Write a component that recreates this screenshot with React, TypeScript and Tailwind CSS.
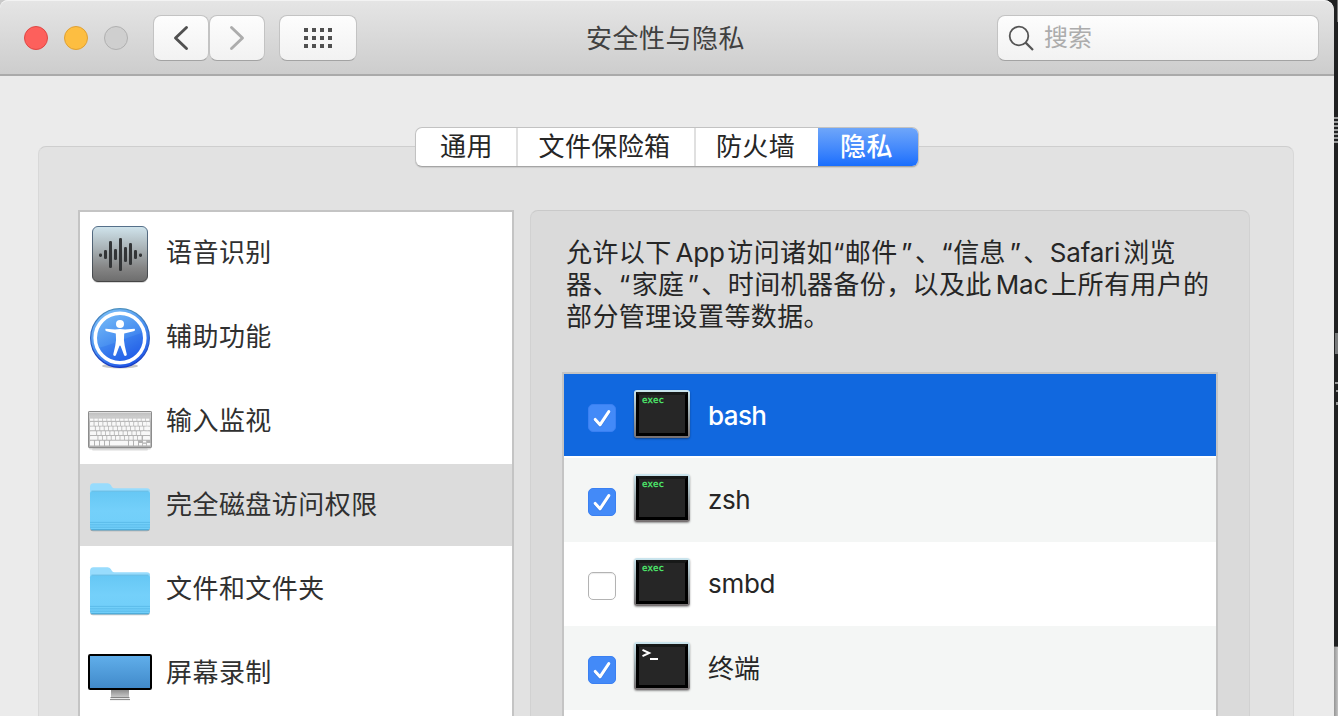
import React from "react";

const font = "font-[Inter,'Noto_Sans_CJK_SC',sans-serif]";

function VoiceIcon() {
  const bars: [number, number, number][] = [
    [12.5, 31.5, 2.5], [17.5, 28, 9], [22.5, 19, 27], [27.5, 27, 11], [32.5, 16, 33],
    [37.5, 25, 15], [42.5, 21, 22], [47.5, 28, 9], [52.5, 31.5, 2.5],
  ];
  return (
    <svg width="64" height="64" viewBox="0 0 64 64" className="shrink-0">
      <defs>
        <linearGradient id="voice" x1="0" y1="0" x2="0" y2="1">
          <stop offset="0" stopColor="#d0e4ec" />
          <stop offset="0.4" stopColor="#a9b2b6" />
          <stop offset="0.75" stopColor="#858585" />
          <stop offset="1" stopColor="#6d6d6d" />
        </linearGradient>
        <linearGradient id="voiceEdge" x1="0" y1="0" x2="0" y2="1">
          <stop offset="0" stopColor="#56708a" />
          <stop offset="1" stopColor="#454545" />
        </linearGradient>
      </defs>
      <rect x="4" y="5" width="56" height="56" rx="6" fill="#000" opacity="0.15" />
      <rect x="4.5" y="4.5" width="55" height="55" rx="5.5" fill="url(#voice)" stroke="url(#voiceEdge)" />
      {bars.map(([x, y, h]) => (
        <rect key={x} x={x - 1.5} y={y} width="3" height={Math.max(h, 3.4)} rx="1.3" fill="#333537" />
      ))}
    </svg>
  );
}

function AccessIcon() {
  return (
    <svg width="64" height="64" viewBox="0 0 64 64" className="shrink-0">
      <defs>
        <linearGradient id="acc" x1="0.2" y1="0" x2="0.75" y2="1">
          <stop offset="0" stopColor="#7cc0f8" />
          <stop offset="0.5" stopColor="#4a91f1" />
          <stop offset="1" stopColor="#1a50e6" />
        </linearGradient>
        <linearGradient id="accEdge" x1="0" y1="0" x2="0" y2="1">
          <stop offset="0" stopColor="#4c8fbd" />
          <stop offset="1" stopColor="#1538c4" />
        </linearGradient>
      </defs>
      <ellipse cx="32" cy="60" rx="18" ry="2.4" fill="#000" opacity="0.22" />
      <circle cx="32" cy="32" r="29.4" fill="url(#acc)" stroke="url(#accEdge)" strokeWidth="1.2" />
      <path d="M9 42C22 40 36 32 54 27A23 23 0 0 1 9 42Z" fill="#1556e8" opacity="0.2" />
      <circle cx="32" cy="32" r="24.8" fill="none" stroke="#fff" strokeWidth="3.6" />
      <circle cx="32" cy="18" r="4" fill="#fff" />
      <path d="M17.5 22.8 Q16.5 24.6 18.5 25.2 L27.8 27.6 Q28.6 34 27.2 40 L25.2 48.5 Q25.4 50.6 27.8 49.6 L31.2 40.4 Q32 38.6 32.8 40.4 L36.2 49.6 Q38.6 50.6 38.8 48.5 L36.8 40 Q35.4 34 36.2 27.6 L45.5 25.2 Q48 24.4 46.5 22.8 L37 23.6 Q32 22.6 27 23.6 Z" fill="#fff" />
    </svg>
  );
}

function KeyboardIcon() {
  const rows = [30.5, 35, 39.8, 44.5];
  return (
    <svg width="64" height="64" viewBox="0 0 64 64" className="shrink-0">
      <defs>
        <linearGradient id="kb" x1="0" y1="0" x2="0" y2="1">
          <stop offset="0" stopColor="#bcbcbc" />
          <stop offset="0.15" stopColor="#cdcdcd" />
          <stop offset="0.3" stopColor="#b7b7b7" />
          <stop offset="1" stopColor="#b1b1b1" />
        </linearGradient>
      </defs>
      <rect x="1" y="56" width="62" height="3.4" rx="1.5" fill="#000" opacity="0.15" />
      <rect x="4" y="58" width="56" height="3" rx="1.5" fill="#000" opacity="0.07" />
      <rect x="0.5" y="21.5" width="63" height="36" rx="0.6" fill="url(#kb)" stroke="#8c8c8c" />
      <rect x="1" y="22" width="62" height="0.9" fill="#e2e2e2" />
      {Array.from({ length: 14 }, (_, i) => (
        <rect key={i} x={2 + i * 4.3} y="28.6" width="3.5" height="2.2" fill="#fafafa" />
      ))}
      {rows.map((y, r) => (
        <g key={y} fill="#f8f8f8">
          <rect x="2" y={y + 1.4} width={3.6 + r * 1.3} height="3.8" rx="0.5" />
          {Array.from({ length: 12 - (r > 1 ? r - 1 : 0) }, (_, i) => (
            <rect key={i} x={6.5 + r * 1.3 + i * 4.4} y={y + 1.4} width="3.6" height="3.8" rx="0.5" />
          ))}
          <rect x={r > 1 ? 55 : 58.5} y={y + 1.4} width={r > 1 ? 7 : 3.5} height="3.8" rx="0.5" />
        </g>
      ))}
      <g fill="#f8f8f8">
        {[2, 7, 12, 17].map((x) => (
          <rect key={x} x={x} y="50.8" width="4" height="4.6" rx="0.5" />
        ))}
        <rect x="22" y="50.8" width="18" height="4.6" rx="0.5" />
        {[41, 46].map((x) => (
          <rect key={x} x={x} y="50.8" width="4" height="4.6" rx="0.5" />
        ))}
        <rect x="51" y="53" width="3.2" height="2.4" />
        <rect x="55" y="50.8" width="3.2" height="4.6" />
        <rect x="59" y="53" width="3.2" height="2.4" />
      </g>
      <path d="M55 53.1h3.2" stroke="#888" strokeWidth="0.8" />
    </svg>
  );
}

function FolderIcon() {
  return (
    <svg width="64" height="64" viewBox="0 0 64 64" className="shrink-0">
      <defs>
        <linearGradient id="folder" x1="0" y1="0" x2="0" y2="1">
          <stop offset="0" stopColor="#66c7f4" />
          <stop offset="0.5" stopColor="#74d0fa" />
          <stop offset="1" stopColor="#70cef9" />
        </linearGradient>
      </defs>
      <rect x="2" y="15" width="60" height="42.3" rx="3" fill="#000" opacity="0.25" />
      <path d="M2 13Q2 9.2 5.4 9.2H19.6Q21.6 9.2 22.8 11L23.8 12.7Q24.8 14.2 26.6 14.2H59Q62 14.2 62 17.2V50H2Z" fill="#98dcfd" />
      <path d="M2 19.5Q2 17.2 4.3 17.2H59.7Q62 17.2 62 19.5V53.3Q62 56.3 59 56.3H5Q2 56.3 2 53.3Z" fill="url(#folder)" />
      <path d="M3.5 17.1H60.5" stroke="#62b6dd" strokeWidth="0.8" />
      <path d="M2 48.4H62M2 50.8H62M2 53.2H62" stroke="#57b8e6" strokeWidth="0.8" />
      <path d="M3.2 55.7H60.8" stroke="#48a5d3" strokeWidth="1" />
    </svg>
  );
}

function DisplayIcon() {
  return (
    <svg width="64" height="64" viewBox="0 0 64 64" className="shrink-0">
      <defs>
        <linearGradient id="screen" x1="0" y1="0" x2="0" y2="1">
          <stop offset="0" stopColor="#60aeea" />
          <stop offset="1" stopColor="#418aca" />
        </linearGradient>
        <linearGradient id="stand" x1="0" y1="0" x2="0" y2="1">
          <stop offset="0" stopColor="#8f8f8f" />
          <stop offset="1" stopColor="#c8c8c8" />
        </linearGradient>
      </defs>
      <rect x="23" y="48" width="18" height="7.2" fill="url(#stand)" />
      <path d="M22.5 55.5H41.5" stroke="#777" strokeWidth="0.9" />
      <path d="M22.5 56H41.5V57.5H22.5Z" fill="#e7e7e7" />
      <path d="M22 57.6H42" stroke="#858585" strokeWidth="1" />
      <rect x="0" y="12" width="64" height="36" rx="2.2" fill="#000" />
      <rect x="2" y="14" width="60" height="32" fill="url(#screen)" />
    </svg>
  );
}

function TerminalIcon({ prompt }: { prompt?: boolean }) {
  return (
    <div className="h-12 w-14 shrink-0 rounded-[3px] bg-linear-to-b from-[#cbe6ef] via-[#9aa7ab] to-[#777172] p-[2px] shadow-[0_1px_2px_rgba(0,0,0,0.4)]">
      <div className="h-11 border-[3px] border-x-black border-t-[#171918] border-b-black bg-[#262626] pl-[3px]">
        {prompt ? (
          <svg width="20" height="16" viewBox="0 0 20 16" className="block">
            <path d="M0.5 2.8L7.2 6L0.5 9.2" fill="none" stroke="#fff" strokeWidth="2" />
            <path d="M8 12H16" stroke="#fff" strokeWidth="2" />
          </svg>
        ) : (
          <span className="block font-['DejaVu_Sans_Mono',monospace] text-[9px] leading-[10px] font-normal tracking-[0.1px] text-[#50f070] [-webkit-text-stroke:0.3px_#50f070]">exec</span>
        )}
      </div>
    </div>
  );
}

function Checkbox({ checked }: { checked: boolean }) {
  if (!checked)
    return <div className="mt-3 h-7 w-7 shrink-0 rounded-[5px] border border-[#b3b3b3] bg-white shadow-[inset_0_1px_1px_rgba(0,0,0,0.08)]" />;
  return (
    <div className="mt-3 h-7 w-7 shrink-0 rounded-[5px] border border-[#3a80f2] bg-[#438af8]">
      <svg width="26" height="26" viewBox="0 0 26 26" className="block">
        <path d="M6.2 14.4L11 19.8L19.8 6.6" transform="translate(0 1)" fill="none" stroke="#1d5fc4" strokeWidth="3" strokeLinecap="round" strokeLinejoin="round" opacity="0.4" />
        <path d="M6.2 14.4L11 19.8L19.8 6.6" fill="none" stroke="#fff" strokeWidth="3" strokeLinecap="round" strokeLinejoin="round" />
      </svg>
    </div>
  );
}

const categories = [
  { label: "语音识别", icon: <VoiceIcon /> },
  { label: "辅助功能", icon: <AccessIcon /> },
  { label: "输入监视", icon: <KeyboardIcon /> },
  { label: "完全磁盘访问权限", icon: <FolderIcon />, selected: true },
  { label: "文件和文件夹", icon: <FolderIcon /> },
  { label: "屏幕录制", icon: <DisplayIcon /> },
];

const apps = [
  { name: "bash", checked: true, row: "bg-[#1168df] text-white font-medium border-b-2 border-white tracking-[-0.6px]" },
  { name: "zsh", checked: true, row: "bg-[#f4f6f5] tracking-[-0.4px]" },
  { name: "smbd", checked: false, row: "bg-white tracking-[-0.3px]" },
  { name: "终端", checked: true, row: "bg-[#f4f6f5]", prompt: true },
];

const button = "flex h-[46px] items-center justify-center rounded-[8px] border border-[#c3c3c3] border-b-[#a3a3a3] bg-linear-to-b from-[#fdfdfd] to-[#f2f2f2]";

function TitleBar() {
  return (
    <header className="flex h-[76px] items-center rounded-tr-[10px] rounded-tl-[8px] border-t border-t-[#f3f3f3] border-b-2 border-b-[#aaaaaa] bg-linear-to-b from-[#e5e5e5] to-[#cdcdcd] pl-6">
      <div className="flex gap-4">
        <div className="h-6 w-6 rounded-full border border-[#df4744] bg-[#fd605c]" />
        <div className="h-6 w-6 rounded-full border border-[#dfa034] bg-[#fdbe41]" />
        <div className="h-6 w-6 rounded-full border border-[#b0b0b0] bg-[#cfcfcf]" />
      </div>
      <div className="ml-[25px] flex">
        <div className={`${button} w-14`}>
          <svg width="16" height="26" viewBox="0 0 16 26">
            <path d="M13.5 2.5L2.5 13L13.5 23.5" fill="none" stroke="#505050" strokeWidth="2.9" strokeLinecap="round" strokeLinejoin="round" />
          </svg>
        </div>
        <div className={`${button} w-14`}>
          <svg width="16" height="26" viewBox="0 0 16 26">
            <path d="M2.5 2.5L13.5 13L2.5 23.5" fill="none" stroke="#acacac" strokeWidth="2.9" strokeLinecap="round" strokeLinejoin="round" />
          </svg>
        </div>
      </div>
      <div className={`${button} ml-[14px] w-[78px]`}>
        <div className="grid grid-cols-4 gap-1">
          {Array.from({ length: 12 }, (_, i) => (
            <div key={i} className="h-1 w-1 bg-[#505050]" />
          ))}
        </div>
      </div>
      <h1 className="mt-[2px] ml-[229px] w-[180px] text-[26px] leading-[38px] tracking-[0.5px] whitespace-nowrap text-[#404040]">安全性与隐私</h1>
      <div className="ml-auto mr-[15px] flex h-[46px] w-[322px] items-center rounded-[8px] border border-[#c3c3c3] border-b-[#a3a3a3] bg-linear-to-b from-[#fdfdfd] to-[#f2f2f2] pl-[10px]">
        <svg width="27" height="27" viewBox="0 0 27 27" className="mt-[2px]">
          <circle cx="11" cy="11" r="9.3" fill="none" stroke="#555" strokeWidth="1.8" />
          <path d="M17.6 17.6L25 25" stroke="#555" strokeWidth="2.2" />
        </svg>
        <span className="ml-[9px] text-[24px] leading-[36px] text-[#acacac]">搜索</span>
      </div>
    </header>
  );
}

function Tabs() {
  return (
    <nav className="relative z-10 mt-[51px] -mb-[21px] ml-[415px] flex h-[40px] w-[504px] shrink-0 overflow-hidden rounded-[7px] border border-[#c2c2c2] border-b-[#a5a5a5] bg-white text-[26px] leading-[38px] tracking-[0.4px] text-[#262626] shadow-[0_1px_1px_rgba(0,0,0,0.1)]">
      <div className="w-[102px] shrink-0 border-r-2 border-[#e0e0e0] pl-px text-center">通用</div>
      <div className="w-[178px] shrink-0 border-r-2 border-[#e0e0e0] pr-[3px] text-center">文件保险箱</div>
      <div className="w-[122px] shrink-0 pr-[3px] text-center">防火墙</div>
      <div className="-my-px -mr-px w-[101px] shrink-0 bg-linear-to-b from-[#70a7f9] to-[#156cfd] pt-px pr-[4px] text-center font-medium text-white">隐私</div>
    </nav>
  );
}

function Backdrop() {
  return (
    <div className="flex w-1 flex-col items-end overflow-hidden bg-[#202122]">
      <div className="mt-0 h-[22px] w-px bg-[#777]" />
      <div className="mt-[95px] flex w-1 flex-col gap-[2px]">
        {[0, 1, 2, 3, 4, 5, 6].map((i) => (
          <div key={i} className="h-[2px] bg-[#9a9b9b]" />
        ))}
      </div>
      <div className="mt-[190px] h-[21px] w-[3px] bg-[#77797a]" />
      <div className="mt-[28px] h-[2px] w-[3px] bg-[#999]" />
      <div className="mt-[6px] h-[2px] w-[2px] bg-[#999]" />
      <div className="mt-[10px] h-[3px] w-[2px] bg-[#999]" />
      <div className="mt-auto h-[70px] w-1 border-t border-[#555] bg-linear-to-r from-[#949494] to-[#c4c4c4]" />
    </div>
  );
}

export default function App() {
  return (
    <div className={`${font} flex h-[716px] w-[1338px] overflow-hidden bg-[linear-gradient(90deg,#c9c9c9_50%,#202122_50%)] text-[#262626]`}>
      <div className="flex w-[1334px] flex-col rounded-tl-[8px] rounded-tr-[10px] bg-[#ebebeb]">
        <TitleBar />
        <Tabs />
        <main className="mx-10 ml-[38px] flex min-h-0 flex-1 rounded-t-[8px] border border-b-0 border-[#d8d8d8] border-t-[#cecece] bg-[#e2e2e2] pt-[63px] pl-[39px]">
          <aside className="w-[436px] shrink-0 overflow-hidden border-2 border-b-0 border-[#c4c4c4] bg-white">
            {categories.map((c) => (
              <div key={c.label} className={`flex h-[84px] border-b-2 border-white pl-2 ${c.selected ? "bg-[#dcdcdc]" : "bg-white"}`}>
                <div className="pt-[10px]">{c.icon}</div>
                <span className="ml-[14px] pt-[22px] text-[26px] leading-[38px] tracking-[0.45px] text-[#303030]">{c.label}</span>
              </div>
            ))}
          </aside>
          <section className="ml-4 flex w-[720px] shrink-0 flex-col overflow-hidden rounded-t-[8px] border border-b-0 border-[#d1d1d1] border-t-[#c9c9c9] bg-[#dadada] px-[31px] pt-[26px]">
            <p className="h-[135px] shrink-0 pl-1 text-[26px] leading-[32px] tracking-[0.4px] whitespace-nowrap">
              <span className="block">允许以下<span className="mr-[2.5px] ml-1 tracking-[-0.2px]">App</span>访问诸如“邮件<span className="mr-[2px] ml-[3.5px]">”</span>、“信息<span className="mr-[2px] ml-[3.5px]">”</span>、<span className="mr-[3px] tracking-[-0.2px]">Safari</span>浏览</span>
              <span className="block">器、<span className="mr-px">“</span>家庭<span className="mr-[2px] ml-[3px]">”</span>、时间机器备份，以及此<span className="mr-[3px] ml-1 tracking-[-0.2px]">Mac</span>上所有用户的</span>
              <span className="block">部分管理设置等数据。</span>
            </p>
            <div className="min-h-0 flex-1 overflow-hidden border-2 border-b-0 border-[#c4c4c4] bg-white">
              {apps.map((a) => (
                <div key={a.name} className={`flex h-[84px] items-start pt-4 pl-6 text-[26px] leading-[38px] ${a.row}`}>
                  <div className="pt-[2px]"><Checkbox checked={a.checked} /></div>
                  <div className="ml-[18px]"><TerminalIcon prompt={a.prompt} /></div>
                  <span className={`ml-[18px] ${a.prompt ? "mt-2" : "mt-[7px]"}`}>{a.name}</span>
                </div>
              ))}
            </div>
          </section>
        </main>
      </div>
      <Backdrop />
    </div>
  );
}
